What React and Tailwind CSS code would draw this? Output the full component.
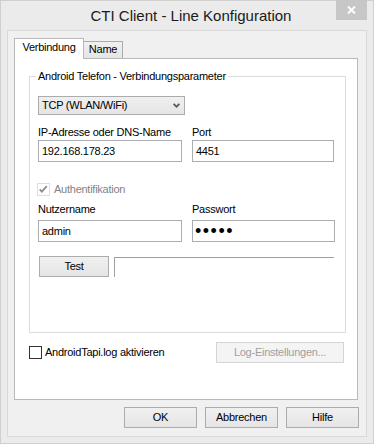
export default function App() {
  const btn =
    "h-[21px] border border-[#acacac] bg-linear-to-b from-[#f0f0f0] to-[#e5e5e5] flex items-center justify-center text-black";
  const input = "h-[22px] border border-[#abadb3] bg-white flex items-center";
  return (
    <div className="w-[374px] h-[444px] bg-[#ebebeb] border border-[#cfcfcf] flex flex-col font-['Liberation_Sans',Arial,sans-serif] text-[11px] leading-[13px] tracking-[-0.25px] text-black select-none">
      {/* Title bar */}
      <div className="h-[29px] shrink-0 grid grid-cols-[1fr_auto_1fr] pl-[14px] pr-[6px]">
        <div />
        <div className="self-start mt-[6px] text-[15px] leading-[17px] tracking-normal text-[#1a1a1a] whitespace-nowrap">
          CTI Client - Line Konfiguration
        </div>
        <div className="flex justify-end items-start">
          <div className="-mt-px w-[31px] h-[20px] bg-[#c7c7c7] flex items-center justify-center">
            <svg width="9" height="8" viewBox="0 0 9 8">
              <path d="M1 0.5l7 7M8 0.5l-7 7" stroke="white" strokeWidth="1.9" fill="none" />
            </svg>
          </div>
        </div>
      </div>

      {/* Client area */}
      <div className="mx-[6px] mb-[6px] flex-1 border border-[#d9d9d9] bg-[#f0f0f0] pl-[6px] pr-[8px] pt-[7px] flex flex-col">
        {/* Tabs */}
        <div className="flex items-end relative z-10">
          <div className="h-[21px] w-[70px] bg-white border-t border-l border-r border-[#b9b9b9] pt-[2px] text-center">
            Verbindung
          </div>
          <div className="h-[17px] w-[39px] mb-px bg-linear-to-b from-[#f0f0f0] to-[#e5e5e5] border-t border-r border-[#acacac] pt-[1px] text-center">
            Name
          </div>
        </div>

        {/* Tab panel */}
        <div className="-mt-px h-[342px] w-[344px] bg-white border border-[#b9b9b9] flex flex-col">
          <fieldset className="mt-[11px] ml-[14px] w-[317px] border border-[#dcdcdc] pl-[8px] pr-0 pt-[13px] pb-[55px]">
            <legend className="-ml-[2px] px-[2px]">Android Telefon - Verbindungsparameter</legend>

            <div className="w-[147px] h-[19px] border border-[#acacac] bg-linear-to-b from-[#f0f0f0] to-[#e5e5e5] flex items-center justify-between pl-[3px] pr-[4px]">
              <span>TCP (WLAN/WiFi)</span>
              <svg width="7" height="5" viewBox="0 0 7 5">
                <path d="M0.6 0.8L3.5 3.7L6.4 0.8" stroke="#5a5a5a" strokeWidth="1.8" fill="none" />
              </svg>
            </div>

            <div className="mt-[11px] grid grid-cols-[144px_143px] gap-x-[10px]">
              <div className="whitespace-nowrap">IP-Adresse oder DNS-Name</div>
              <div>Port</div>
              <div className={`${input} mt-px pl-[3px]`}>192.168.178.23</div>
              <div className={`${input} mt-px pl-[3px] w-[142px]`}>4451</div>
            </div>

            <div className="mt-[21px] h-[13px] flex items-center text-[#838383]">
              <div className="-ml-px w-[13px] h-[13px] border border-[#dedede] bg-white flex items-center justify-center">
                <svg width="13" height="13" viewBox="0 0 13 13">
                  <path d="M2 6.3L4.6 9L10.4 2.6" stroke="#8c8c8c" strokeWidth="2.1" fill="none" />
                </svg>
              </div>
              <span className="ml-[4px]">Authentifikation</span>
            </div>

            <div className="mt-[7px] grid grid-cols-[144px_143px] gap-x-[10px]">
              <div>Nutzername</div>
              <div>Passwort</div>
              <div className={`${input} mt-[4px] pl-[3px]`}>admin</div>
              <div className={`${input} mt-[4px] pl-[2px]`}>
                <span className="text-[18px] leading-none tracking-[1.5px]">•••••</span>
              </div>
            </div>

            <div className="mt-[14px] flex items-start">
              <button type="button" className={`${btn} ml-px w-[70px]`}>
                Test
              </button>
              <div className="ml-[5px] mt-px w-[220px] h-[20px] border-t border-l border-[#a0a0a0]" />
            </div>
          </fieldset>

          <div className="mt-[9px] ml-[14px] mr-[13px] flex items-center justify-between">
            <div className="flex items-center">
              <div className="w-[13px] h-[13px] border border-[#333333] bg-white" />
              <span className="ml-[3px]">AndroidTapi.log aktivieren</span>
            </div>
            <button
              type="button"
              className="w-[128px] h-[21px] border border-[#d5d5d5] bg-[#f4f4f4] text-[#a0a0a0] flex items-center justify-center"
            >
              Log-Einstellungen...
            </button>
          </div>
        </div>

        {/* Dialog buttons */}
        <div className="mt-[7px] -mr-px flex justify-end gap-[8px]">
          <button type="button" className={`${btn} w-[73px]`}>OK</button>
          <button type="button" className={`${btn} w-[73px]`}>Abbrechen</button>
          <button type="button" className={`${btn} w-[73px]`}>Hilfe</button>
        </div>
      </div>
    </div>
  );
}
